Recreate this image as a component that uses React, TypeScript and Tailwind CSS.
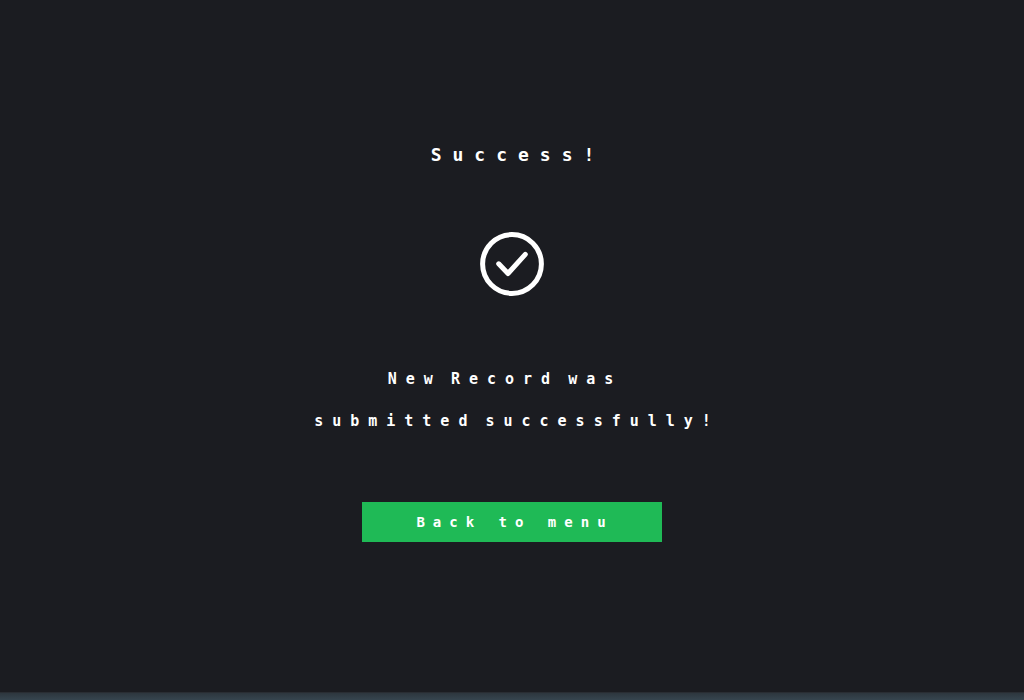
const lines = [
  { words: ["New", "Record", "was"], pad: "pr-3.5" },
  { words: ["submitted", "successfully!"], pad: "pl-2.5" },
];

function SuccessIcon() {
  return (
    <svg
      className="size-16"
      viewBox="0 0 64 64"
      fill="none"
      stroke="white"
      strokeWidth="5"
      strokeLinecap="round"
      strokeLinejoin="round"
      aria-hidden="true"
    >
      <circle cx="32" cy="32" r="29.4" />
      <path d="M18.7 31.8 28 41.5 45.3 22.4" />
    </svg>
  );
}

export default function App() {
  return (
    <div className="flex min-h-screen flex-col bg-[#1b1c21] font-['DejaVu_Sans_Mono',monospace] text-white">
      <main className="flex grow flex-col items-center px-4 pt-[140px]">
        <h1 className="pl-3 text-[18px] leading-[30px] font-bold tracking-[11px]">Success!</h1>
        <div className="mt-[62px]">
          <SuccessIcon />
        </div>
        <p className="mt-[62px] text-center text-[15px] leading-[42px] font-bold tracking-[9px]">
          {lines.map((line) => (
            <span key={line.words[0]} className={`block ${line.pad}`}>
              {line.words.map((word, i) => (
                <span key={word}>
                  {i > 0 && <span className="tracking-normal"> </span>}
                  {word}
                </span>
              ))}
            </span>
          ))}
        </p>
        <button
          type="button"
          className="mt-[60px] h-10 w-[300px] max-w-full bg-[#1fba56] pl-1.5 text-[14px] font-bold tracking-[8px]"
        >
          Back to menu
        </button>
      </main>
      <footer className="h-2 border-t border-[#292d33] bg-linear-to-b from-[#2d363e] to-[#36454f]" />
    </div>
  );
}
